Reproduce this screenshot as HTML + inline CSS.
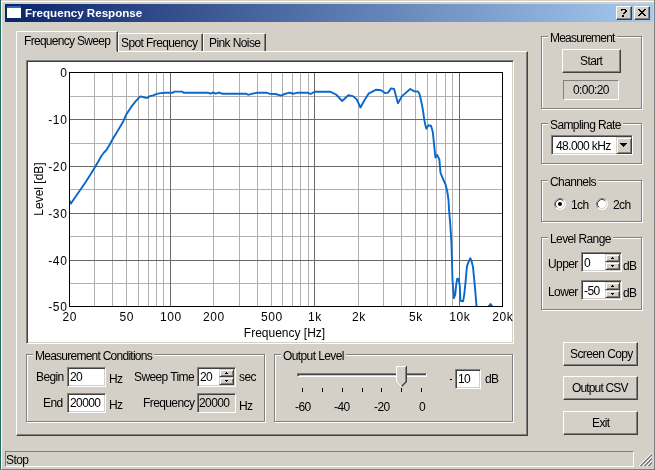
<!DOCTYPE html>
<html><head><meta charset="utf-8"><style>
*{box-sizing:border-box;margin:0;padding:0}
html,body{width:655px;height:470px;overflow:hidden;background:#d4d0c8}
body{position:relative;-webkit-font-smoothing:antialiased;font-family:"Liberation Sans",sans-serif;font-size:12px;color:#000}
.a{position:absolute}
.t{position:absolute;white-space:nowrap;letter-spacing:-0.6px;line-height:13px}
.btn{position:absolute;background:#d4d0c8;border-top:1px solid #fff;border-left:1px solid #fff;border-right:1px solid #404040;border-bottom:1px solid #404040;box-shadow:inset -1px -1px 0 #808080}
.edit{position:absolute;background:#fff;border-top:1px solid #808080;border-left:1px solid #808080;border-right:1px solid #fff;border-bottom:1px solid #fff;box-shadow:inset 1px 1px 0 #404040,inset -1px -1px 0 #d4d0c8}
.grp{position:absolute;border:1px solid #808080;box-shadow:1px 1px 0 #fff,inset 1px 1px 0 #fff}
.gl{position:absolute;background:#d4d0c8;padding:0 2px;white-space:nowrap;letter-spacing:-0.6px;line-height:13px}
.spin{position:absolute;background:#d4d0c8;border-top:1px solid #d4d0c8;border-left:1px solid #d4d0c8;border-right:1px solid #404040;border-bottom:1px solid #404040;box-shadow:inset 1px 1px 0 #fff,inset -1px -1px 0 #808080}
</style></head>
<body><div id="root" style="position:absolute;left:0;top:0;width:655px;height:470px;will-change:transform">
<div class="a" style="left:0px;top:0px;width:1px;height:470px;background:#1a6a5e"></div>
<div class="a" style="left:1px;top:1px;width:653px;height:1px;background:#fff"></div>
<div class="a" style="left:1px;top:1px;width:1px;height:468px;background:#fff"></div>
<div class="a" style="left:654px;top:0px;width:1px;height:470px;background:#808080"></div>
<div class="a" style="left:0px;top:469px;width:655px;height:1px;background:#808080"></div>
<div class="a" style="left:5px;top:4px;width:648px;height:18px;background:linear-gradient(to right,#0a246a,#a6caf0)"></div>
<svg class="a" style="left:5px;top:4px" width="18" height="18" shape-rendering="crispEdges"><rect x="2" y="2" width="14" height="2" fill="#2a6ab8"/><rect x="2" y="4" width="14" height="10" fill="#fbfff8"/></svg>
<div class="t" style="left:25px;top:6px;font-weight:bold;color:#fff;font-size:11.6px;letter-spacing:0">Frequency Response</div>
<div class="btn" style="left:616px;top:6px;width:16px;height:14px"></div>
<div class="btn" style="left:634px;top:6px;width:16px;height:14px"></div>
<svg class="a" style="left:616px;top:6px" width="16" height="14" shape-rendering="crispEdges"><path d="M5 3h5v1h1v2h-1v1h-1v1h-2v-1h1v-1h1v-2h-3v1h-1v-1z M6 9h2v2h-2z M7 7h1v1h-1z" fill="#000"/></svg>
<svg class="a" style="left:634px;top:6px" width="16" height="14" shape-rendering="crispEdges"><rect x="4" y="3" width="2" height="1" fill="#000"/><rect x="10" y="3" width="2" height="1" fill="#000"/><rect x="5" y="4" width="2" height="1" fill="#000"/><rect x="9" y="4" width="2" height="1" fill="#000"/><rect x="6" y="5" width="4" height="1" fill="#000"/><rect x="7" y="6" width="2" height="1" fill="#000"/><rect x="6" y="7" width="4" height="1" fill="#000"/><rect x="5" y="8" width="2" height="1" fill="#000"/><rect x="9" y="8" width="2" height="1" fill="#000"/><rect x="4" y="9" width="2" height="1" fill="#000"/><rect x="10" y="9" width="2" height="1" fill="#000"/></svg>
<div class="a" style="left:16px;top:51px;width:512px;height:385px;border-top:1px solid #fff;border-left:1px solid #fff;border-right:1px solid #404040;border-bottom:1px solid #404040;box-shadow:inset -1px -1px 0 #808080"></div>
<div class="a" style="left:118px;top:33px;width:85px;height:18px;border-top:1px solid #fff;border-left:1px solid #fff;border-right:1px solid #404040;box-shadow:inset -1px 0 0 #808080"></div>
<div class="t" style="left:121px;top:37px;">Spot Frequency</div>
<div class="a" style="left:203px;top:33px;width:63px;height:18px;border-top:1px solid #fff;border-left:1px solid #fff;border-right:1px solid #404040;box-shadow:inset -1px 0 0 #808080"></div>
<div class="t" style="left:209px;top:37px;">Pink Noise</div>
<div class="a" style="left:16px;top:31px;width:102px;height:21px;background:#d4d0c8;border-top:1px solid #fff;border-left:1px solid #fff;border-right:1px solid #404040;box-shadow:inset -1px 0 0 #808080;border-top-left-radius:2px"></div>
<div class="a" style="left:17px;top:51px;width:100px;height:1px;background:#d4d0c8"></div>
<div class="t" style="left:24px;top:35px;letter-spacing:-0.7px">Frequency Sweep</div>
<div class="a" style="left:26px;top:60px;width:488px;height:284px;background:#fff;border-top:1px solid #808080;border-left:1px solid #808080;border-right:1px solid #fff;border-bottom:1px solid #fff;box-shadow:inset 1px 1px 0 #404040,inset -1px -1px 0 #d4d0c8"></div>
<svg class="a" style="left:0;top:0" width="655" height="470" shape-rendering="crispEdges">
<rect x="94" y="73" width="1" height="233" fill="#b0b0b0"/>
<rect x="112" y="73" width="1" height="233" fill="#b0b0b0"/>
<rect x="126" y="73" width="1" height="233" fill="#b0b0b0"/>
<rect x="138" y="73" width="1" height="233" fill="#b0b0b0"/>
<rect x="148" y="73" width="1" height="233" fill="#b0b0b0"/>
<rect x="156" y="73" width="1" height="233" fill="#b0b0b0"/>
<rect x="163" y="73" width="1" height="233" fill="#b0b0b0"/>
<rect x="213" y="73" width="1" height="233" fill="#b0b0b0"/>
<rect x="239" y="73" width="1" height="233" fill="#b0b0b0"/>
<rect x="257" y="73" width="1" height="233" fill="#b0b0b0"/>
<rect x="271" y="73" width="1" height="233" fill="#b0b0b0"/>
<rect x="282" y="73" width="1" height="233" fill="#b0b0b0"/>
<rect x="292" y="73" width="1" height="233" fill="#b0b0b0"/>
<rect x="300" y="73" width="1" height="233" fill="#b0b0b0"/>
<rect x="308" y="73" width="1" height="233" fill="#b0b0b0"/>
<rect x="358" y="73" width="1" height="233" fill="#b0b0b0"/>
<rect x="383" y="73" width="1" height="233" fill="#b0b0b0"/>
<rect x="401" y="73" width="1" height="233" fill="#b0b0b0"/>
<rect x="415" y="73" width="1" height="233" fill="#b0b0b0"/>
<rect x="427" y="73" width="1" height="233" fill="#b0b0b0"/>
<rect x="436" y="73" width="1" height="233" fill="#b0b0b0"/>
<rect x="445" y="73" width="1" height="233" fill="#b0b0b0"/>
<rect x="452" y="73" width="1" height="233" fill="#b0b0b0"/>
<rect x="70" y="96" width="432" height="1" fill="#b0b0b0"/>
<rect x="70" y="143" width="432" height="1" fill="#b0b0b0"/>
<rect x="70" y="189" width="432" height="1" fill="#b0b0b0"/>
<rect x="70" y="236" width="432" height="1" fill="#b0b0b0"/>
<rect x="70" y="283" width="432" height="1" fill="#b0b0b0"/>
<rect x="170" y="73" width="1" height="233" fill="#6a6a6a"/>
<rect x="314" y="73" width="1" height="233" fill="#6a6a6a"/>
<rect x="459" y="73" width="1" height="233" fill="#6a6a6a"/>
<rect x="70" y="119" width="432" height="1" fill="#6a6a6a"/>
<rect x="70" y="166" width="432" height="1" fill="#6a6a6a"/>
<rect x="70" y="213" width="432" height="1" fill="#6a6a6a"/>
<rect x="70" y="260" width="432" height="1" fill="#6a6a6a"/>
<rect x="69" y="72" width="434" height="1" fill="#000"/><rect x="69" y="306" width="434" height="1" fill="#000"/><rect x="69" y="72" width="1" height="235" fill="#000"/><rect x="502" y="72" width="1" height="235" fill="#000"/>
<clipPath id="cp"><rect x="70" y="73" width="432" height="233"/></clipPath>
<g clip-path="url(#cp)" shape-rendering="geometricPrecision"><polyline points="69.2,200.4 70.8,203.6 75,197.5 80.9,189 86,181.5 90,175.3 94.3,168.2 98,162 101.7,155.5 104,152.5 106.5,150 110,144 113.6,137.5 117,132 120,127 122.8,122.3 126.1,114.8 128.6,111 132,105.8 135.4,101.6 138.8,97.8 140.5,96.5 143,96.9 145.6,97.9 147.7,97.8 149.9,96.1 153.3,95.4 156.7,93.9 160.9,93.1 165,92.8 172.9,92.7 174.4,91.6 182,91.6 183.6,92.7 208,92.7 210.3,93.7 213.4,92.5 215.6,93.7 219.5,92.5 221.8,93.7 246.2,93.7 248,94.8 252.6,93.7 257.2,92.7 266.4,92.7 269.4,93.7 275.5,94 280.9,95.6 284.7,94 289.3,92.7 293.9,93.7 297.7,92.7 307.6,92.7 310.6,94 314.5,91.8 330.5,91.8 336.1,94.5 342.2,101 348.3,95.3 352.9,96.1 356.7,99.4 360.5,107.5 364.4,100.2 368.9,93.3 375.8,89.8 381.1,90.3 385,93 388,92.6 391.1,88.4 394.1,89 397.9,103.2 401.8,96.4 410.2,89 414.1,91.2 417.9,91.5 419.4,93.8 420.5,98.1 422.1,105.5 423.2,111.9 424.2,119.4 425.3,124.7 426.4,128.7 428.6,125.1 431.1,126 432.8,131.9 434.2,145.6 435.4,157.5 437.1,154.9 439.3,159.2 440.5,172.8 443,178.8 445.6,184.7 447.3,191.5 448.5,200 449,209.4 450.2,223.4 451.4,242.2 451.9,258.5 452.5,280.3 453.2,288.2 453.8,298.1 455.2,294.8 456.1,285.6 457.1,279 458.5,278.7 459.8,285.6 460.4,300.8 463.1,301.4 464.4,293.5 465.7,280.3 467,265.8 469,261.2 470.3,258.2 471.6,261.2 473,267.1 474.3,280.3 475.6,294.8 476.5,306.4 477,312" fill="none" stroke="#0a68cc" stroke-width="1.9" stroke-linejoin="round"/><polyline points="487.5,308 490.5,304 493.5,308" fill="none" stroke="#0a68cc" stroke-width="1.9" stroke-linejoin="round"/></g>
<text x="67.6" y="77" text-anchor="end" letter-spacing="0.7" font-family="Liberation Sans" font-size="12" fill="#000">0</text>
<text x="67.6" y="124" text-anchor="end" letter-spacing="0.7" font-family="Liberation Sans" font-size="12" fill="#000">-10</text>
<text x="67.6" y="171" text-anchor="end" letter-spacing="0.7" font-family="Liberation Sans" font-size="12" fill="#000">-20</text>
<text x="67.6" y="218" text-anchor="end" letter-spacing="0.7" font-family="Liberation Sans" font-size="12" fill="#000">-30</text>
<text x="67.6" y="265" text-anchor="end" letter-spacing="0.7" font-family="Liberation Sans" font-size="12" fill="#000">-40</text>
<text x="67.6" y="311" text-anchor="end" letter-spacing="0.7" font-family="Liberation Sans" font-size="12" fill="#000">-50</text>
<text x="69.8" y="321" text-anchor="middle" letter-spacing="0.5" font-family="Liberation Sans" font-size="12" fill="#000">20</text>
<text x="126.8" y="321" text-anchor="middle" letter-spacing="0.5" font-family="Liberation Sans" font-size="12" fill="#000">50</text>
<text x="170.8" y="321" text-anchor="middle" letter-spacing="0.5" font-family="Liberation Sans" font-size="12" fill="#000">100</text>
<text x="213.8" y="321" text-anchor="middle" letter-spacing="0.5" font-family="Liberation Sans" font-size="12" fill="#000">200</text>
<text x="271.8" y="321" text-anchor="middle" letter-spacing="0.5" font-family="Liberation Sans" font-size="12" fill="#000">500</text>
<text x="314.8" y="321" text-anchor="middle" letter-spacing="0.5" font-family="Liberation Sans" font-size="12" fill="#000">1k</text>
<text x="358.8" y="321" text-anchor="middle" letter-spacing="0.5" font-family="Liberation Sans" font-size="12" fill="#000">2k</text>
<text x="415.8" y="321" text-anchor="middle" letter-spacing="0.5" font-family="Liberation Sans" font-size="12" fill="#000">5k</text>
<text x="459.8" y="321" text-anchor="middle" letter-spacing="0.5" font-family="Liberation Sans" font-size="12" fill="#000">10k</text>
<text x="502.8" y="321" text-anchor="middle" letter-spacing="0.5" font-family="Liberation Sans" font-size="12" fill="#000">20k</text>
<text x="284.5" y="337" text-anchor="middle" font-family="Liberation Sans" font-size="12" fill="#000">Frequency [Hz]</text>
<text transform="translate(42.5,189) rotate(-90)" text-anchor="middle" font-family="Liberation Sans" font-size="12" fill="#000">Level [dB]</text>
</svg>
<div class="grp" style="left:26px;top:354px;width:239px;height:68px"></div>
<div class="gl" style="left:33px;top:350px;letter-spacing:-0.75px">Measurement Conditions</div>
<div class="t" style="left:36px;top:371px;">Begin</div>
<div class="edit" style="left:67px;top:367px;width:39px;height:20px;background:#fff"></div>
<div class="t" style="left:70px;top:371px;">20</div>
<div class="t" style="left:109px;top:373px;">Hz</div>
<div class="t" style="left:43px;top:397px;">End</div>
<div class="edit" style="left:67px;top:393px;width:39px;height:20px;background:#fff"></div>
<div class="t" style="left:70px;top:397px;">20000</div>
<div class="t" style="left:109px;top:399px;">Hz</div>
<div class="t" style="left:134px;top:371px;">Sweep Time</div>
<div class="edit" style="left:197px;top:367px;width:39px;height:20px;background:#fff"></div>
<div class="t" style="left:200px;top:371px;">20</div>
<div class="spin" style="left:219px;top:369px;width:15px;height:8px"></div>
<div class="spin" style="left:219px;top:377px;width:15px;height:8px"></div>
<div class="t" style="left:239px;top:371px;">sec</div>
<div class="t" style="left:143px;top:397px;">Frequency</div>
<div class="edit" style="left:197px;top:393px;width:39px;height:20px;background:#d4d0c8"></div>
<div class="t" style="left:199px;top:397px;">20000</div>
<div class="t" style="left:239px;top:400px;">Hz</div>
<div class="grp" style="left:274px;top:354px;width:239px;height:68px"></div>
<div class="gl" style="left:281px;top:350px;">Output Level</div>
<div class="a" style="left:297px;top:373px;width:130px;height:4px;border-top:1px solid #808080;border-left:1px solid #808080;border-bottom:1px solid #fff;border-right:1px solid #fff;box-shadow:inset 1px 1px 0 #404040"></div>
<svg class="a" style="left:396px;top:366px" width="11" height="21" shape-rendering="crispEdges"><path d="M0 0h11v16l-5 5l-5-5z" fill="#d4d0c8" shape-rendering="geometricPrecision"/><rect x="0" y="0" width="10" height="1" fill="#fff"/><rect x="0" y="0" width="1" height="16" fill="#fff"/><rect x="10" y="0" width="1" height="16" fill="#404040"/><rect x="9" y="1" width="1" height="15" fill="#808080"/><path d="M10.5 15.5l-5 5" stroke="#404040" stroke-width="1.2" shape-rendering="geometricPrecision"/><path d="M9.5 15.5l-4 4" stroke="#808080" stroke-width="1" shape-rendering="geometricPrecision"/><path d="M0.5 15.5l5 5" stroke="#fff" stroke-width="1" shape-rendering="geometricPrecision"/></svg>
<svg class="a" style="left:0;top:0" width="655" height="470" shape-rendering="crispEdges"><rect x="302" y="388" width="1" height="4" fill="#000"/><rect x="322" y="388" width="1" height="4" fill="#000"/><rect x="342" y="388" width="1" height="4" fill="#000"/><rect x="362" y="388" width="1" height="4" fill="#000"/><rect x="381" y="388" width="1" height="4" fill="#000"/><rect x="401" y="388" width="1" height="4" fill="#000"/><rect x="421" y="388" width="1" height="4" fill="#000"/></svg>
<div class="t" style="left:295px;top:401px;">-60</div>
<div class="t" style="left:334px;top:401px;">-40</div>
<div class="t" style="left:374px;top:401px;">-20</div>
<div class="t" style="left:419px;top:401px;">0</div>
<div class="a" style="left:450px;top:379px;width:2px;height:1px;background:#000"></div>
<div class="edit" style="left:455px;top:369px;width:26px;height:20px;background:#fff"></div>
<div class="t" style="left:458px;top:373px;">10</div>
<div class="t" style="left:485px;top:373px;">dB</div>
<div class="grp" style="left:541px;top:36px;width:101px;height:73px"></div>
<div class="gl" style="left:548px;top:32px;letter-spacing:-0.8px">Measurement</div>
<div class="btn" style="left:562px;top:49px;width:59px;height:24px"></div>
<div class="t" style="left:580px;top:55px;">Start</div>
<div class="a" style="left:563px;top:80px;width:56px;height:20px;border-top:1px solid #808080;border-left:1px solid #808080;border-bottom:1px solid #fff;border-right:1px solid #fff"></div>
<div class="t" style="left:573px;top:84px;">0:00:20</div>
<div class="grp" style="left:541px;top:123px;width:101px;height:41px"></div>
<div class="gl" style="left:548px;top:119px;">Sampling Rate</div>
<div class="edit" style="left:551px;top:135px;width:82px;height:20px;background:#fff"></div>
<div class="t" style="left:556px;top:140px;letter-spacing:-0.6px">48.000 kHz</div>
<div class="spin" style="left:616px;top:137px;width:16px;height:17px"></div>
<svg class="a" style="left:0;top:0" width="655" height="470" shape-rendering="crispEdges"><path d="M620 143h7v1h-1v1h-1v1h-1v1h-1v-1h-1v-1h-1v-1h-1z" fill="#000"/></svg>
<div class="grp" style="left:541px;top:180px;width:101px;height:42px"></div>
<div class="gl" style="left:548px;top:176px;">Channels</div>
<svg class="a" style="left:554px;top:198px" width="12" height="12"><circle cx="6" cy="6" r="5.5" fill="#fff"/><path d="M2.11 9.89 A5.5 5.5 0 0 1 9.89 2.11" fill="none" stroke="#808080" stroke-width="1"/><path d="M9.89 2.11 A5.5 5.5 0 0 1 2.11 9.89" fill="none" stroke="#fff" stroke-width="1"/><path d="M2.82 9.18 A4.5 4.5 0 0 1 9.18 2.82" fill="none" stroke="#404040" stroke-width="1"/><path d="M9.18 2.82 A4.5 4.5 0 0 1 2.82 9.18" fill="none" stroke="#d4d0c8" stroke-width="1"/><circle cx="6" cy="6" r="2" fill="#000"/></svg>
<div class="t" style="left:571px;top:199px;">1ch</div>
<svg class="a" style="left:596px;top:198px" width="12" height="12"><circle cx="6" cy="6" r="5.5" fill="#fff"/><path d="M2.11 9.89 A5.5 5.5 0 0 1 9.89 2.11" fill="none" stroke="#808080" stroke-width="1"/><path d="M9.89 2.11 A5.5 5.5 0 0 1 2.11 9.89" fill="none" stroke="#fff" stroke-width="1"/><path d="M2.82 9.18 A4.5 4.5 0 0 1 9.18 2.82" fill="none" stroke="#404040" stroke-width="1"/><path d="M9.18 2.82 A4.5 4.5 0 0 1 2.82 9.18" fill="none" stroke="#d4d0c8" stroke-width="1"/></svg>
<div class="t" style="left:613px;top:199px;">2ch</div>
<div class="grp" style="left:541px;top:237px;width:101px;height:73px"></div>
<div class="gl" style="left:548px;top:233px;">Level Range</div>
<div class="t" style="left:548px;top:258px;">Upper</div>
<div class="edit" style="left:581px;top:252px;width:41px;height:20px;background:#fff"></div>
<div class="t" style="left:584px;top:257px;">0</div>
<div class="spin" style="left:605px;top:254px;width:15px;height:8px"></div>
<div class="spin" style="left:605px;top:262px;width:15px;height:8px"></div>
<div class="t" style="left:623px;top:260px;">dB</div>
<div class="t" style="left:548px;top:286px;">Lower</div>
<div class="edit" style="left:581px;top:280px;width:41px;height:20px;background:#fff"></div>
<div class="t" style="left:584px;top:285px;">-50</div>
<div class="spin" style="left:605px;top:282px;width:15px;height:8px"></div>
<div class="spin" style="left:605px;top:290px;width:15px;height:8px"></div>
<div class="t" style="left:623px;top:287px;">dB</div>
<svg class="a" style="left:0;top:0" width="655" height="470" shape-rendering="crispEdges"><path d="M226 372h1v1h1v1h-3v-1h1z" fill="#000"/><path d="M612 257h1v1h1v1h-3v-1h1z" fill="#000"/><path d="M612 285h1v1h1v1h-3v-1h1z" fill="#000"/><path d="M225 380h3v1h-1v1h-1v-1h-1z" fill="#000"/><path d="M611 265h3v1h-1v1h-1v-1h-1z" fill="#000"/><path d="M611 293h3v1h-1v1h-1v-1h-1z" fill="#000"/></svg>
<div class="btn" style="left:563px;top:342px;width:75px;height:24px"></div>
<div class="t" style="left:570px;top:348px;">Screen Copy</div>
<div class="btn" style="left:563px;top:376px;width:75px;height:24px"></div>
<div class="t" style="left:572px;top:382px;letter-spacing:-0.85px">Output CSV</div>
<div class="btn" style="left:563px;top:411px;width:75px;height:24px"></div>
<div class="t" style="left:592px;top:417px;">Exit</div>
<div class="a" style="left:5px;top:451px;width:629px;height:16px;border-top:1px solid #808080;border-left:1px solid #808080;border-bottom:1px solid #fff;border-right:1px solid #fff"></div>
<div class="t" style="left:6px;top:454px;">Stop</div>
<svg class="a" style="left:0;top:0" width="655" height="470" shape-rendering="crispEdges"><rect x="639" y="465" width="1" height="1" fill="#fff"/><rect x="640" y="464" width="1" height="1" fill="#fff"/><rect x="640" y="465" width="1" height="1" fill="#808080"/><rect x="641" y="463" width="1" height="1" fill="#fff"/><rect x="641" y="464" width="1" height="1" fill="#808080"/><rect x="641" y="465" width="1" height="1" fill="#808080"/><rect x="642" y="462" width="1" height="1" fill="#fff"/><rect x="642" y="463" width="1" height="1" fill="#808080"/><rect x="642" y="464" width="1" height="1" fill="#808080"/><rect x="643" y="461" width="1" height="1" fill="#fff"/><rect x="643" y="462" width="1" height="1" fill="#808080"/><rect x="643" y="463" width="1" height="1" fill="#808080"/><rect x="643" y="465" width="1" height="1" fill="#fff"/><rect x="644" y="460" width="1" height="1" fill="#fff"/><rect x="644" y="461" width="1" height="1" fill="#808080"/><rect x="644" y="462" width="1" height="1" fill="#808080"/><rect x="644" y="464" width="1" height="1" fill="#fff"/><rect x="644" y="465" width="1" height="1" fill="#808080"/><rect x="645" y="459" width="1" height="1" fill="#fff"/><rect x="645" y="460" width="1" height="1" fill="#808080"/><rect x="645" y="461" width="1" height="1" fill="#808080"/><rect x="645" y="463" width="1" height="1" fill="#fff"/><rect x="645" y="464" width="1" height="1" fill="#808080"/><rect x="645" y="465" width="1" height="1" fill="#808080"/><rect x="646" y="458" width="1" height="1" fill="#fff"/><rect x="646" y="459" width="1" height="1" fill="#808080"/><rect x="646" y="460" width="1" height="1" fill="#808080"/><rect x="646" y="462" width="1" height="1" fill="#fff"/><rect x="646" y="463" width="1" height="1" fill="#808080"/><rect x="646" y="464" width="1" height="1" fill="#808080"/><rect x="647" y="457" width="1" height="1" fill="#fff"/><rect x="647" y="458" width="1" height="1" fill="#808080"/><rect x="647" y="459" width="1" height="1" fill="#808080"/><rect x="647" y="461" width="1" height="1" fill="#fff"/><rect x="647" y="462" width="1" height="1" fill="#808080"/><rect x="647" y="463" width="1" height="1" fill="#808080"/><rect x="647" y="465" width="1" height="1" fill="#fff"/><rect x="648" y="456" width="1" height="1" fill="#fff"/><rect x="648" y="457" width="1" height="1" fill="#808080"/><rect x="648" y="458" width="1" height="1" fill="#808080"/><rect x="648" y="460" width="1" height="1" fill="#fff"/><rect x="648" y="461" width="1" height="1" fill="#808080"/><rect x="648" y="462" width="1" height="1" fill="#808080"/><rect x="648" y="464" width="1" height="1" fill="#fff"/><rect x="648" y="465" width="1" height="1" fill="#808080"/><rect x="649" y="455" width="1" height="1" fill="#fff"/><rect x="649" y="456" width="1" height="1" fill="#808080"/><rect x="649" y="457" width="1" height="1" fill="#808080"/><rect x="649" y="459" width="1" height="1" fill="#fff"/><rect x="649" y="460" width="1" height="1" fill="#808080"/><rect x="649" y="461" width="1" height="1" fill="#808080"/><rect x="649" y="463" width="1" height="1" fill="#fff"/><rect x="649" y="464" width="1" height="1" fill="#808080"/><rect x="649" y="465" width="1" height="1" fill="#808080"/><rect x="650" y="454" width="1" height="1" fill="#fff"/><rect x="650" y="455" width="1" height="1" fill="#808080"/><rect x="650" y="456" width="1" height="1" fill="#808080"/><rect x="650" y="458" width="1" height="1" fill="#fff"/><rect x="650" y="459" width="1" height="1" fill="#808080"/><rect x="650" y="460" width="1" height="1" fill="#808080"/><rect x="650" y="462" width="1" height="1" fill="#fff"/><rect x="650" y="463" width="1" height="1" fill="#808080"/><rect x="650" y="464" width="1" height="1" fill="#808080"/><rect x="651" y="453" width="1" height="1" fill="#fff"/><rect x="651" y="454" width="1" height="1" fill="#808080"/><rect x="651" y="455" width="1" height="1" fill="#808080"/><rect x="651" y="457" width="1" height="1" fill="#fff"/><rect x="651" y="458" width="1" height="1" fill="#808080"/><rect x="651" y="459" width="1" height="1" fill="#808080"/><rect x="651" y="461" width="1" height="1" fill="#fff"/><rect x="651" y="462" width="1" height="1" fill="#808080"/><rect x="651" y="463" width="1" height="1" fill="#808080"/></svg>
</div></body></html>
